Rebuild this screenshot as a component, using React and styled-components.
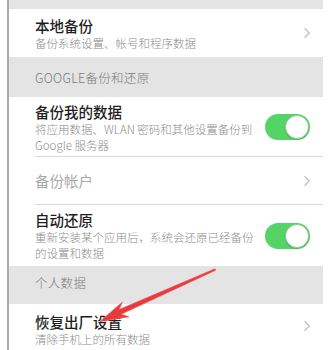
import React from "react";
import styled, { createGlobalStyle } from "styled-components";

const GlobalStyle = createGlobalStyle`
  html, body {
    margin: 0;
    padding: 0;
    background: #ffffff;
  }
  body {
    font-family: "Noto Sans CJK SC", "Noto Sans", sans-serif;
    width: 330px;
    height: 350px;
    overflow: hidden;
  }
`;

export default function App() {
  return (
    <>
      <GlobalStyle />
      <Page>
        <Gutter />
        <Panel>
          <SectionHeader $height={9} />

          <Row $top={8} $height={48}>
            <RowBody>
              <Texts>
                <Title>本地备份</Title>
                <Sub>备份系统设置、帐号和程序数据</Sub>
              </Texts>
              <Chevron />
            </RowBody>
          </Row>

          <SectionHeader $height={40}>GOOGLE备份和还原</SectionHeader>

          <Row $top={6} $height={60} $divider>
            <RowBody>
              <Texts>
                <Title>备份我的数据</Title>
                <Sub>
                  将应用数据、WLAN 密码和其他设置备份到
                  <br />
                  Google 服务器
                </Sub>
              </Texts>
              <Toggle />
            </RowBody>
          </Row>

          <Row $top={0} $height={48} $divider $center>
            <RowBody>
              <Texts>
                <Title $disabled>备份帐户</Title>
              </Texts>
              <Chevron />
            </RowBody>
          </Row>

          <Row $top={6} $height={61}>
            <RowBody>
              <Texts>
                <Title>自动还原</Title>
                <Sub>
                  重新安装某个应用后，系统会还原已经备份
                  <br />
                  的设置和数据
                </Sub>
              </Texts>
              <Toggle />
            </RowBody>
          </Row>

          <SectionHeader $height={38} $shift={-3}>个人数据</SectionHeader>

          <Row $top={9} $height={50}>
            <RowBody>
              <Texts>
                <Title>恢复出厂设置</Title>
                <Sub>清除手机上的所有数据</Sub>
              </Texts>
              <Chevron $shift={-3} />
            </RowBody>
          </Row>
        </Panel>
        <Arrow />
      </Page>
    </>
  );
}

function Chevron({ $shift = 0 }) {
  return (
    <ChevronWrap $shift={$shift}>
      <svg width="8" height="12" viewBox="0 0 8 12">
        <path
          d="M1.5 1.2 L6.3 6 L1.5 10.8"
          fill="none"
          stroke="#c2c2c2"
          strokeWidth="1.3"
        />
      </svg>
    </ChevronWrap>
  );
}

function Toggle() {
  return (
    <Switch>
      <Knob />
    </Switch>
  );
}

function Arrow() {
  return (
    <ArrowLayer>
      <svg width="330" height="350" viewBox="0 0 330 350">
        <polygon
          points="100,321.5 122.2,302.2 119.1,309.6 215,268.8 215.6,270.2 121.1,314.2 128.8,316.8"
          fill="#e8393d"
          stroke="#ee6a6c"
          strokeWidth="0.6"
          strokeLinejoin="round"
        />
      </svg>
    </ArrowLayer>
  );
}

const Page = styled.div`
  position: relative;
  display: flex;
  width: 330px;
  height: 350px;
  overflow: hidden;
  background: #ffffff;
`;

const Gutter = styled.div`
  width: 7px;
  flex-shrink: 0;
  border-right: 2px solid #a9a9a9;
`;

const Panel = styled.div`
  width: 314px;
  flex-shrink: 0;
  display: flex;
  flex-direction: column;
  background: #ffffff;
`;

const SectionHeader = styled.div`
  box-sizing: border-box;
  height: ${(p) => p.$height}px;
  flex-shrink: 0;
  background: #e4e4e4;
  display: flex;
  align-items: center;
  padding-left: 26px;
  padding-bottom: ${(p) => (p.$shift ? -p.$shift * 2 : 0)}px;
  font-size: 12.5px;
  font-weight: 300;
  color: #7a7a7a;
  letter-spacing: 0.3px;
`;

const Row = styled.div`
  box-sizing: border-box;
  height: ${(p) => p.$height}px;
  flex-shrink: 0;
  padding-left: 26px;
  display: flex;
  background: #ffffff;

  > div {
    padding-top: ${(p) => p.$top}px;
    align-items: ${(p) => (p.$center ? "center" : "flex-start")};
    border-bottom: ${(p) => (p.$divider ? "1px solid #dcdcdc" : "none")};
  }
`;

const RowBody = styled.div`
  box-sizing: border-box;
  flex: 1;
  display: flex;
  justify-content: space-between;
  padding-right: 13px;
  position: relative;
`;

const Texts = styled.div`
  display: flex;
  flex-direction: column;
`;

const Title = styled.div`
  font-size: 14.5px;
  line-height: 18px;
  font-weight: ${(p) => (p.$disabled ? 400 : 500)};
  color: ${(p) => (p.$disabled ? "#a8a8a8" : "#1e1e1e")};
`;

const Sub = styled.div`
  font-size: 11.5px;
  line-height: 16px;
  font-weight: 300;
  color: #8c8c8c;
`;

const ChevronWrap = styled.div`
  position: absolute;
  right: 12px;
  top: 50%;
  margin-top: ${(p) => p.$shift - 6}px;
  height: 12px;
  display: flex;
`;

const Switch = styled.div`
  position: absolute;
  right: 13px;
  top: 50%;
  margin-top: -13px;
  width: 45px;
  height: 26px;
  border-radius: 13px;
  background: #55d466;
  box-sizing: border-box;
`;

const Knob = styled.div`
  position: absolute;
  right: 1px;
  top: 1px;
  width: 24px;
  height: 24px;
  border-radius: 50%;
  background: #ffffff;
  box-sizing: border-box;
  border: 1px solid #8ec996;
  box-shadow: 0 1px 2px rgba(0, 0, 0, 0.15);
`;

const ArrowLayer = styled.div`
  position: absolute;
  left: 0;
  top: 0;
  pointer-events: none;
  filter: drop-shadow(0 0 0.6px rgba(232, 57, 61, 0.5));
`;
